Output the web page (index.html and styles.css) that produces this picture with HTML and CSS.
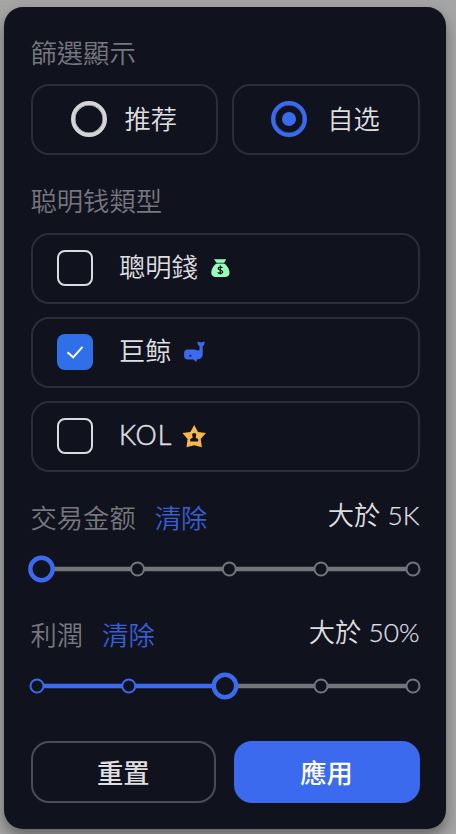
FILE: index.html
```html
<!DOCTYPE html>
<html lang="zh-Hant">
<head>
<meta charset="utf-8">
<meta name="viewport" content="width=device-width">
<title>篩選</title>
<link rel="stylesheet" href="styles.css">
</head>
<body>
<main class="panel">
  <h2 class="title">篩選顯示</h2>
  <div class="radios">
    <label class="option radio"><span class="dot"></span><span class="text">推荐</span></label>
    <label class="option radio"><span class="dot on"></span><span class="text">自选</span></label>
  </div>
  <h2 class="title types">聪明钱類型</h2>
  <div class="checks">
    <label class="option check"><span class="box"></span><span class="text">聰明錢</span>
      <svg class="icon" viewBox="0 0 24 24"><path fill="#98ffba" d="M5 3.200h12.200l-2.300 4.100c3 2 5.600 5.800 5.600 9.400 0 3-1.900 4.300-4.900 4.300H7.500c-3 0-5.200-1.300-5.200-4.200 0-3.700 2.600-7.600 5.500-9.500z"/><path fill="none" stroke="#10121d" stroke-width=".8" d="M6 7.200h11"/><path fill="none" stroke="#10121d" stroke-width="1.200" d="M13.600 11.700c-.6-.8-4.500-1.200-4.500.8 0 2.100 4.600 1 4.600 3.300 0 2.200-4.200 1.700-5 .6M11.300 9.600v9"/></svg>
    </label>
    <label class="option check"><span class="box on"><svg viewBox="0 0 36 36"><path d="M10.500 18.300l5.700 5 9.300-10.500"/></svg></span><span class="text">巨鲸</span>
      <svg class="icon whale" viewBox="0 0 24 24"><path fill="#3c6aee" d="M14.500 1.500l3.500 1 3.500-1c.2 2.500-.3 3.900-1.800 4.500v8.300c0 2.900-1.600 4.900-5.700 5.200l-.7 2.500-3-2.500H5c-2.600 0-3.900-1.200-3.900-3.400V13c0-2.200 1.200-3.400 3.600-3.400h6.600c1.800 0 2.300 1 3.700 1 1 0 1.500-.4 1.500-1.600V6c-1.500-.6-2.200-2-2-4.500z"/><circle cx="7.300" cy="15.800" r="1" fill="#10121d"/></svg>
    </label>
    <label class="option check"><span class="box"></span><span class="text latin">KOL</span>
      <svg class="icon" viewBox="0 0 24 24"><path fill="#f7b84b" d="M12.200 1l3.800 7 8 1-5.300 6 1.200 8.200-7.700-1.900-7.700 1.900L5.600 15 .4 9l8-1z"/><circle cx="12.200" cy="11" r="2.100" fill="#10121d"/><path fill="#10121d" d="M10.800 12h2.800l.3 1.900 2.300 1.100v2.600h-8V15l2.300-1.100z"/></svg>
    </label>
  </div>

  <div class="head amount"><span class="name">交易金额</span><a class="clear">清除</a><span class="value">大於 <span class="number">5K</span></span></div>
  <svg class="slider" viewBox="28 0 394 30">
    <path class="rail" d="M41 15H413"/>
    <circle class="stop" cx="137.500" cy="15" r="6.500"/><circle class="stop" cx="229.300" cy="15" r="6.500"/><circle class="stop" cx="321" cy="15" r="6.500"/><circle class="stop" cx="413" cy="15" r="6.500"/>
    <circle class="thumb" cx="41.500" cy="15" r="11.200"/>
  </svg>

  <div class="head profit"><span class="name">利潤</span><a class="clear">清除</a><span class="value">大於 <span class="number">50%</span></span></div>
  <svg class="slider" viewBox="28 0 394 30">
    <path class="rail" d="M225 15H413"/><path class="rail filled" d="M37 15H225"/>
    <circle class="stop filled" cx="37" cy="15" r="6.500"/><circle class="stop filled" cx="128.800" cy="15" r="6.500"/><circle class="stop" cx="321" cy="15" r="6.500"/><circle class="stop" cx="413" cy="15" r="6.500"/>
    <circle class="thumb" cx="225" cy="15" r="11.200"/>
  </svg>

  <div class="actions"><button class="reset">重置</button><button class="apply">應用</button></div>
</main>
</body>
</html>
```
FILE: styles.css
```css
* { box-sizing: border-box; }
body {
  margin: 0;
  height: 834px;
  overflow: hidden;
  padding: 7px 10px 5px 4px;
  background: #a5a5a5;
  font-family: Lato, "Noto Sans CJK SC", sans-serif;
  font-size: 26.3px;
  font-weight: 350;
  color: #dedee0;
}
.panel {
  height: 822px;
  padding: 26px 26.5px;
  border-radius: 19px;
  background: #10121d;
  box-shadow: 0 7px 14px rgba(0, 0, 0, .38);
}
.title {
  margin: 0;
  height: 40px;
  line-height: 40px;
  font-size: inherit;
  font-weight: 350;
  color: #77777e;
}
.types { margin-top: 26px; }
.radios {
  display: grid;
  grid-template-columns: 1fr 1fr;
  gap: 13.5px;
  margin-top: 11px;
}
.option {
  display: flex;
  align-items: center;
  height: 71px;
  border: 2px solid #2c2d39;
  border-radius: 18px;
}
.radio { padding-left: 38.500px; padding-bottom: 1px; }
.radio:last-child { padding-left: 37.500px; }
.radio .text { margin-left: 17.500px; }
.radio:last-child .text { margin-left: 20px; }
.text { line-height: 38px; padding-bottom: 1px; }
.dot {
  display: grid;
  place-items: center;
  width: 36px;
  height: 36px;
  border: 4px solid #d5d4d9;
  border-radius: 50%;
  box-shadow: inset 0 0 0 .5px #d5d4d9;
}
.dot.on { border-color: #3c6aee; box-shadow: inset 0 0 0 .5px #3c6aee; }
.dot.on::after {
  content: "";
  width: 14px;
  height: 14px;
  border-radius: 50%;
  background: #3c6aee;
}
.checks {
  display: grid;
  gap: 13px;
  margin-top: 12px;
}
.check { height: 70.900px; padding-left: 24.500px; padding-bottom: 1px; }
.check .text { margin-left: 26px; }
.latin { font-size: 26.800px; letter-spacing: .9px; -webkit-text-stroke: .55px currentColor; }
.latin + .icon { margin-left: 10px; }
.box {
  width: 36px;
  height: 36px;
  border: 2px solid #dddbdf;
  border-radius: 8px;
}
.box.on { border: 0; background: #2f70e8; }
.box svg { display: block; }
.box path { fill: none; stroke: #fff; stroke-width: 2; }
.icon {
  width: 24px;
  height: 24px;
  margin-left: 11px;
}
.head {
  display: flex;
  height: 40px;
  line-height: 40px;
}
.amount { margin-top: 26px; }
.profit { margin-top: 31px; }
.name { color: #77777e; }
.clear { margin-left: 19px; color: #385fd3; }
.value { margin-left: auto; margin-top: -3px; }
.number { -webkit-text-stroke: .25px currentColor; }
.slider {
  display: block;
  width: 394px;
  height: 30px;
  margin: 16px 0 0 -2.500px;
}
.rail { stroke: #74747b; stroke-width: 4.400; }
.stop { fill: #10121d; stroke: #74747b; stroke-width: 2; }
.rail.filled, .stop.filled { stroke: #3c6aee; }
.thumb { fill: #10121d; stroke: #3c6aee; stroke-width: 4.400; }
.actions {
  display: grid;
  grid-template-columns: 1fr 1fr;
  gap: 17.500px;
  margin-top: 40.500px;
}
button {
  height: 62px;
  padding: 0 0 2px;
  border: 2px solid #4c4c57;
  border-radius: 18px;
  background: transparent;
  color: #dedee0;
  font: 500 26.300px Lato, "Noto Sans CJK TC", sans-serif;
}
.apply { border: 0; background: #3c6aee; color: #fff; }
```
